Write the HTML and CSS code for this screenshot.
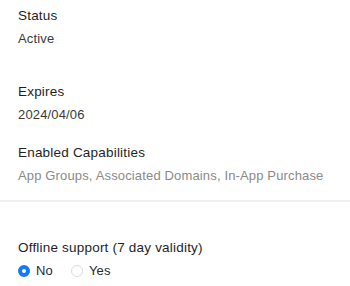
FILE: index.html
```html
<!DOCTYPE html>
<html>
<head>
<meta charset="utf-8">
<link rel="stylesheet" href="styles.css">
</head>
<body>
<div class="page">
  <section class="info">
    <div class="field field-status">
      <div class="label">Status</div>
      <div class="value">Active</div>
    </div>
    <div class="field field-expires">
      <div class="label">Expires</div>
      <div class="value">2024/04/06</div>
    </div>
    <div class="field field-caps">
      <div class="label">Enabled Capabilities</div>
      <div class="value muted">App Groups, Associated Domains, In-App Purchase</div>
    </div>
  </section>
  <hr class="divider">
  <section class="offline">
    <div class="label">Offline support (7 day validity)</div>
    <div class="radios">
      <label class="radio checked"><span class="dot"></span><span>No</span></label>
      <label class="radio"><span class="dot"></span><span>Yes</span></label>
    </div>
  </section>
</div>
</body>
</html>
```
FILE: styles.css
```css
html, body {
  margin: 0;
  padding: 0;
  background: #ffffff;
}
body {
  font-family: "Liberation Sans", Arial, sans-serif;
  font-size: 13px;
  letter-spacing: 0.15px;
  color: #1f1f1f;
}
.page {
  display: flex;
  flex-direction: column;
}
.info {
  padding: 6px 18px 0;
  display: flex;
  flex-direction: column;
}
.field {
  display: flex;
  flex-direction: column;
  gap: 3px;
}
.label, .value {
  line-height: 20px;
  white-space: nowrap;
}
.label {
  font-size: 13.5px;
  letter-spacing: 0.2px;
}
.value {
  color: #3a3a3a;
}
.value.muted {
  color: #8a8a8a;
}
.field-expires {
  margin-top: 33px;
}
.field-caps {
  margin-top: 18px;
}
.divider {
  border: none;
  height: 2px;
  background: #efefef;
  margin: 14px 0 0;
}
.offline {
  padding: 36px 18px 0;
  display: flex;
  flex-direction: column;
  gap: 3px;
}
.radios {
  display: flex;
  gap: 18px;
  line-height: 20px;
}
.radio {
  display: flex;
  align-items: center;
  gap: 6px;
  color: #2a2a2a;
}
.dot {
  width: 10px;
  height: 10px;
  border-radius: 50%;
  border: 1px solid #dcdcdc;
  background: #fff;
  box-sizing: content-box;
}
.radio.checked .dot {
  width: 4px;
  height: 4px;
  border: 4px solid #1677ff;
}
```
